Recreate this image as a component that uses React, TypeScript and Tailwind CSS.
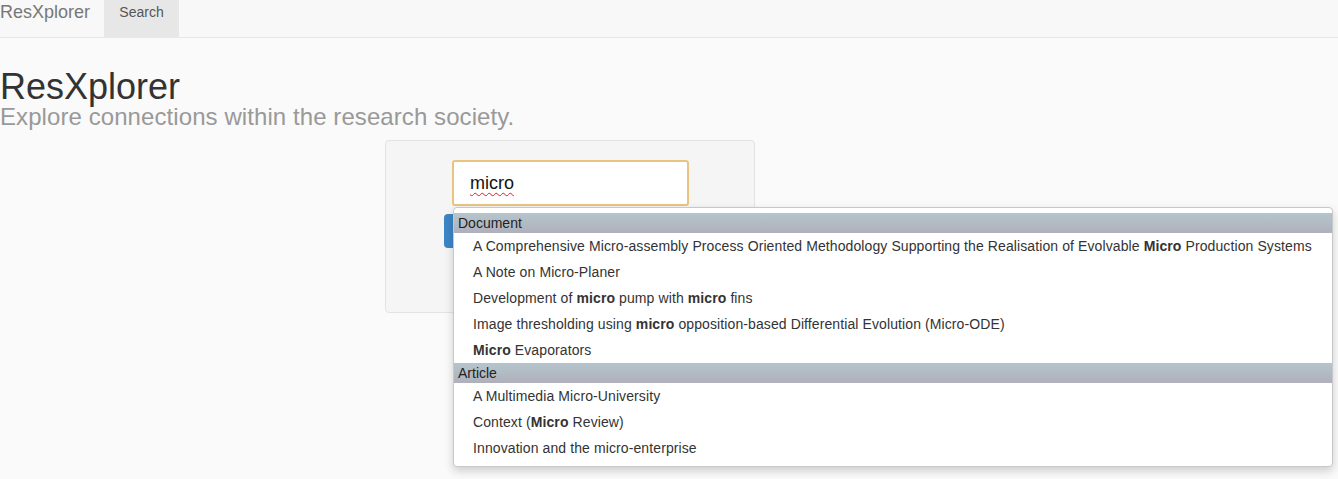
import React from "react";

const font = { fontFamily: '"Liberation Sans", Arial, sans-serif' };

type Part = { text: string; bold?: boolean };

const groups: { name: string; items: Part[][] }[] = [
  {
    name: "Document",
    items: [
      [
        { text: "A Comprehensive Micro-assembly Process Oriented Methodology Supporting the Realisation of Evolvable " },
        { text: "Micro", bold: true },
        { text: " Production Systems" },
      ],
      [{ text: "A Note on Micro-Planer" }],
      [
        { text: "Development of " },
        { text: "micro", bold: true },
        { text: " pump with " },
        { text: "micro", bold: true },
        { text: " fins" },
      ],
      [
        { text: "Image thresholding using " },
        { text: "micro", bold: true },
        { text: " opposition-based Differential Evolution (Micro-ODE)" },
      ],
      [{ text: "Micro", bold: true }, { text: " Evaporators" }],
    ],
  },
  {
    name: "Article",
    items: [
      [{ text: "A Multimedia Micro-University" }],
      [{ text: "Context (" }, { text: "Micro", bold: true }, { text: " Review)" }],
      [{ text: "Innovation and the micro-enterprise" }],
    ],
  },
];

export default function App() {
  return (
    <div className="h-[479px] w-full overflow-hidden bg-[#fafafa] text-[#333]" style={font}>
      {/* navbar */}
      <div className="flex h-[38px] border-b border-[#e7e7e7] bg-[#f8f8f8]">
        <span className="w-[104px] text-[18px] leading-[24px] text-[#777]">ResXplorer</span>
        <span className="flex h-[37px] w-[75px] justify-center bg-[#e7e7e7] pt-[4px] text-[14px] leading-[16px] text-[#555]">
          Search
        </span>
      </div>

      {/* header */}
      <h1 className="mt-[32px] text-[36px] leading-[34px] text-[#333]">ResXplorer</h1>
      <p className="mt-[3px] text-[24px] leading-[20px] tracking-[0.08px] text-[#999]">
        Explore connections within the research society.
      </p>

      {/* search well */}
      <div className="relative ml-[385px] mt-[13px] h-[173px] w-[370px] rounded-[4px] border border-[#e3e3e3] bg-[#f5f5f5] pt-[19px] pl-[66px]">
        <div className="flex h-[46px] w-[237px] items-center rounded-[3px] border-2 border-[#e8c480] bg-white pl-[16px] text-[18px] text-[#111]">
          <span className="underline decoration-[#e02020] decoration-wavy decoration-1 underline-offset-[3px]">micro</span>
        </div>
        <div className="ml-[-8px] mt-[8px] h-[34px] w-[120px] rounded-[4px] bg-[#3d85c6]" />

        {/* autocomplete dropdown */}
        <div className="absolute left-[67px] top-[66px] w-[880px] rounded-[4px] border border-[#c8c8c8] bg-white py-[5px] shadow-[0_4px_10px_rgba(0,0,0,0.18)]">
          {groups.map((g) => (
            <div key={g.name}>
              <div className="h-[20px] bg-gradient-to-b from-[#b5c5cd] to-[#afb0ba] pl-[4px] text-[14px] leading-[20px] text-[#222]">
                {g.name}
              </div>
              {g.items.map((parts, i) => (
                <div key={i} className="h-[26px] pl-[19px] text-[14px] leading-[26px] tracking-[0.1px] text-[#333]">
                  {parts.map((p, j) =>
                    p.bold ? (
                      <b key={j} className="font-bold">
                        {p.text}
                      </b>
                    ) : (
                      <span key={j}>{p.text}</span>
                    )
                  )}
                </div>
              ))}
            </div>
          ))}
        </div>
      </div>
    </div>
  );
}
